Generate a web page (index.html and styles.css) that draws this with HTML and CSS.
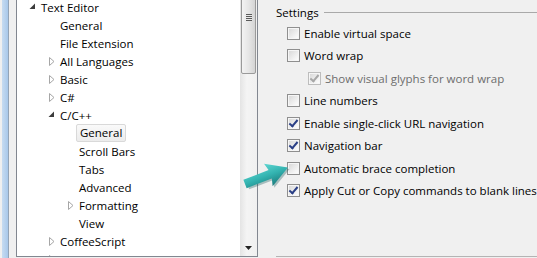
FILE: index.html
```html
<!DOCTYPE html>
<html lang="en">
<head>
    <meta charset="UTF-8">
    <title>Options - Text Editor</title>
    <link rel="stylesheet" href="styles.css">
</head>
<body>
    <div class="window-edge"></div>
    <div class="tree">
        <div class="tree-list">
            <div class="node lvl0"><span class="toggle open"><svg width="7" height="7"><path d="M6 0.5 L6 6 L0.5 6 Z" fill="#3c3c3c"/></svg></span>Text Editor</div>
            <div class="node lvl1"><span class="toggle"></span>General</div>
            <div class="node lvl1"><span class="toggle"></span>File Extension</div>
            <div class="node lvl1"><span class="toggle closed"><svg width="6" height="9"><path d="M0.5 0.5 L5 4.5 L0.5 8.5 Z" fill="#fff" stroke="#a6a6a6"/></svg></span>All Languages</div>
            <div class="node lvl1"><span class="toggle closed"><svg width="6" height="9"><path d="M0.5 0.5 L5 4.5 L0.5 8.5 Z" fill="#fff" stroke="#a6a6a6"/></svg></span>Basic</div>
            <div class="node lvl1"><span class="toggle closed"><svg width="6" height="9"><path d="M0.5 0.5 L5 4.5 L0.5 8.5 Z" fill="#fff" stroke="#a6a6a6"/></svg></span>C#</div>
            <div class="node lvl1"><span class="toggle open"><svg width="7" height="7"><path d="M6 0.5 L6 6 L0.5 6 Z" fill="#3c3c3c"/></svg></span>C/C++</div>
            <div class="node lvl2"><span class="toggle"></span><span class="label selected">General</span></div>
            <div class="node lvl2"><span class="toggle"></span>Scroll Bars</div>
            <div class="node lvl2"><span class="toggle"></span>Tabs</div>
            <div class="node lvl2"><span class="toggle"></span>Advanced</div>
            <div class="node lvl2"><span class="toggle closed"><svg width="6" height="9"><path d="M0.5 0.5 L5 4.5 L0.5 8.5 Z" fill="#fff" stroke="#a6a6a6"/></svg></span>Formatting</div>
            <div class="node lvl2"><span class="toggle"></span>View</div>
            <div class="node lvl1"><span class="toggle closed"><svg width="6" height="9"><path d="M0.5 0.5 L5 4.5 L0.5 8.5 Z" fill="#fff" stroke="#a6a6a6"/></svg></span>CoffeeScript</div>
            <div class="node lvl1"><span class="toggle closed"><svg width="6" height="9"><path d="M0.5 0.5 L5 4.5 L0.5 8.5 Z" fill="#fff" stroke="#a6a6a6"/></svg></span>CSS</div>
        </div>
        <div class="scrollbar">
            <div class="thumb">
                <div class="grip"></div>
            </div>
            <div class="track"></div>
            <div class="arrow-down"><svg width="7" height="4"><path d="M0 0 L7 0 L3.5 4 Z" fill="#222"/></svg></div>
        </div>
    </div>

    <div class="settings">
        <div class="group-title"><span>Settings</span><div class="group-line"></div></div>
        <div class="opt"><span class="check"></span>Enable virtual space</div>
        <div class="opt"><span class="check"></span>Word wrap</div>
        <div class="opt sub disabled"><span class="check on"></span>Show visual glyphs for word wrap</div>
        <div class="opt"><span class="check"></span>Line numbers</div>
        <div class="opt"><span class="check on"></span>Enable single-click URL navigation</div>
        <div class="opt"><span class="check on"></span>Navigation bar</div>
        <div class="opt"><span class="check"></span>Automatic brace completion</div>
        <div class="opt"><span class="check on"></span>Apply Cut or Copy commands to blank lines</div>
        <div class="bottom-line"></div>
    </div>

    <!-- callout arrow pointing at the brace completion box -->
    <svg class="callout" width="56" height="38" viewBox="0 0 56 38">
        <defs>
            <linearGradient id="teal" x1="0" y1="0" x2="0" y2="1">
                <stop offset="0" stop-color="#5fd6d2"/>
                <stop offset="0.5" stop-color="#33b3b0"/>
                <stop offset="1" stop-color="#1b7c7d"/>
            </linearGradient>
        </defs>
        <g transform="translate(4,27) rotate(-21)">
            <path d="M1 -4.5 L27 -4.5 L25 -12 L46 0 L25 12 L27 4.5 L1 4.5 Z" fill="#1f5e5e" opacity="0.35" transform="translate(1,2)"/>
            <path d="M0 -4.5 L27 -4.5 L25 -12 L46 0 L25 12 L27 4.5 L0 4.5 Z" fill="url(#teal)"/>
        </g>
    </svg>
</body>
</html>
```

FILE: styles.css
```css
body {
    margin: 0;
    width: 537px;
    height: 258px;
    overflow: hidden;
    background: #f0f0f0;
    font-family: 'Open Sans', 'Noto Sans', sans-serif;
    font-size: 11.5px;
    color: #000;
    display: flex;
    position: relative;
}
.window-edge {
    width: 6px;
    margin-left: 2px;
    margin-right: 7px;
    background: linear-gradient(to right, #c7dcf1, #a9c8ea);
    border-right: 1px solid #93a4b7;
}
.tree {
    width: 240px;
    height: 256px;
    display: flex;
    border: 1px solid #828790;
    border-top: none;
    background: #fff;
}
.tree-list {
    flex: 1;
    overflow: hidden;
    margin-top: -2px;
}
.node {
    height: 18px;
    display: flex;
    align-items: center;
    white-space: nowrap;
}
.lvl0 { padding-left: 12px; }
.lvl1 { padding-left: 31px; }
.lvl2 { padding-left: 50px; }
.toggle {
    width: 12px;
    display: flex;
    align-items: center;
}
.toggle.open svg { margin-top: -1px; }
.toggle.closed svg { margin-left: 1px; }
.label.selected {
    margin-left: -3px;
    padding: 0 3px;
    line-height: 16px;
    border: 1px solid #d9d9d9;
    border-radius: 2px;
    background: linear-gradient(#fafafa, #ececec);
}
.scrollbar {
    width: 17px;
    display: flex;
    flex-direction: column;
    background: linear-gradient(to right, #e4e4e4, #f4f4f4 40%, #f0f0f0);
}
.thumb {
    height: 76px;
    margin: -4px 1px 0;
    border: 1px solid #9a9a9a;
    border-radius: 2px;
    background: linear-gradient(to right, #f3f3f3, #e6e6e6 50%, #d4d4d4);
    display: flex;
    align-items: flex-start;
    justify-content: center;
}
.grip {
    margin-top: 17px;
    width: 6px;
    height: 7px;
    background: repeating-linear-gradient(#5a5a5a 0 1px, #e8e8e8 1px 2px);
}
.track { flex: 1; }
.arrow-down {
    height: 17px;
    display: flex;
    justify-content: center;
    align-items: center;
    padding-right: 1px;
}
.settings {
    flex: 1;
    display: flex;
    flex-direction: column;
    padding: 4px 0 0 18px;
}
.group-title {
    height: 16px;
    display: flex;
    align-items: center;
    margin-bottom: 2px;
}
.group-line {
    flex: 1;
    height: 1px;
    margin-left: 5px;
    background: #a9a9a9;
}
.opt {
    height: 22.5px;
    display: flex;
    align-items: center;
    padding-left: 11px;
    white-space: nowrap;
}
.opt.sub { padding-left: 32px; }
.opt.disabled { color: #6d6d6d; }
.check {
    width: 11px;
    height: 11px;
    margin-right: 4px;
    border: 1px solid #8f8f8f;
    background: linear-gradient(135deg, #d6d6d6, #f4f4f4 70%, #fff);
    box-shadow: inset 0 0 0 1px #f6f6f6;
    position: relative;
}
.check.on::after {
    content: '';
    position: absolute;
    left: 3px;
    top: 0px;
    width: 3px;
    height: 7px;
    border: solid #2a3f86;
    border-width: 0 2px 2px 0;
    transform: rotate(40deg);
}
.disabled .check { border-color: #bdbdbd; }
.disabled .check.on::after { border-color: #a7a7a7; }
.bottom-line {
    margin-top: auto;
    margin-bottom: 1px;
    height: 1px;
    background: #b4b4b4;
}
.callout {
    position: absolute;
    left: 241px;
    top: 157px;
}
```
